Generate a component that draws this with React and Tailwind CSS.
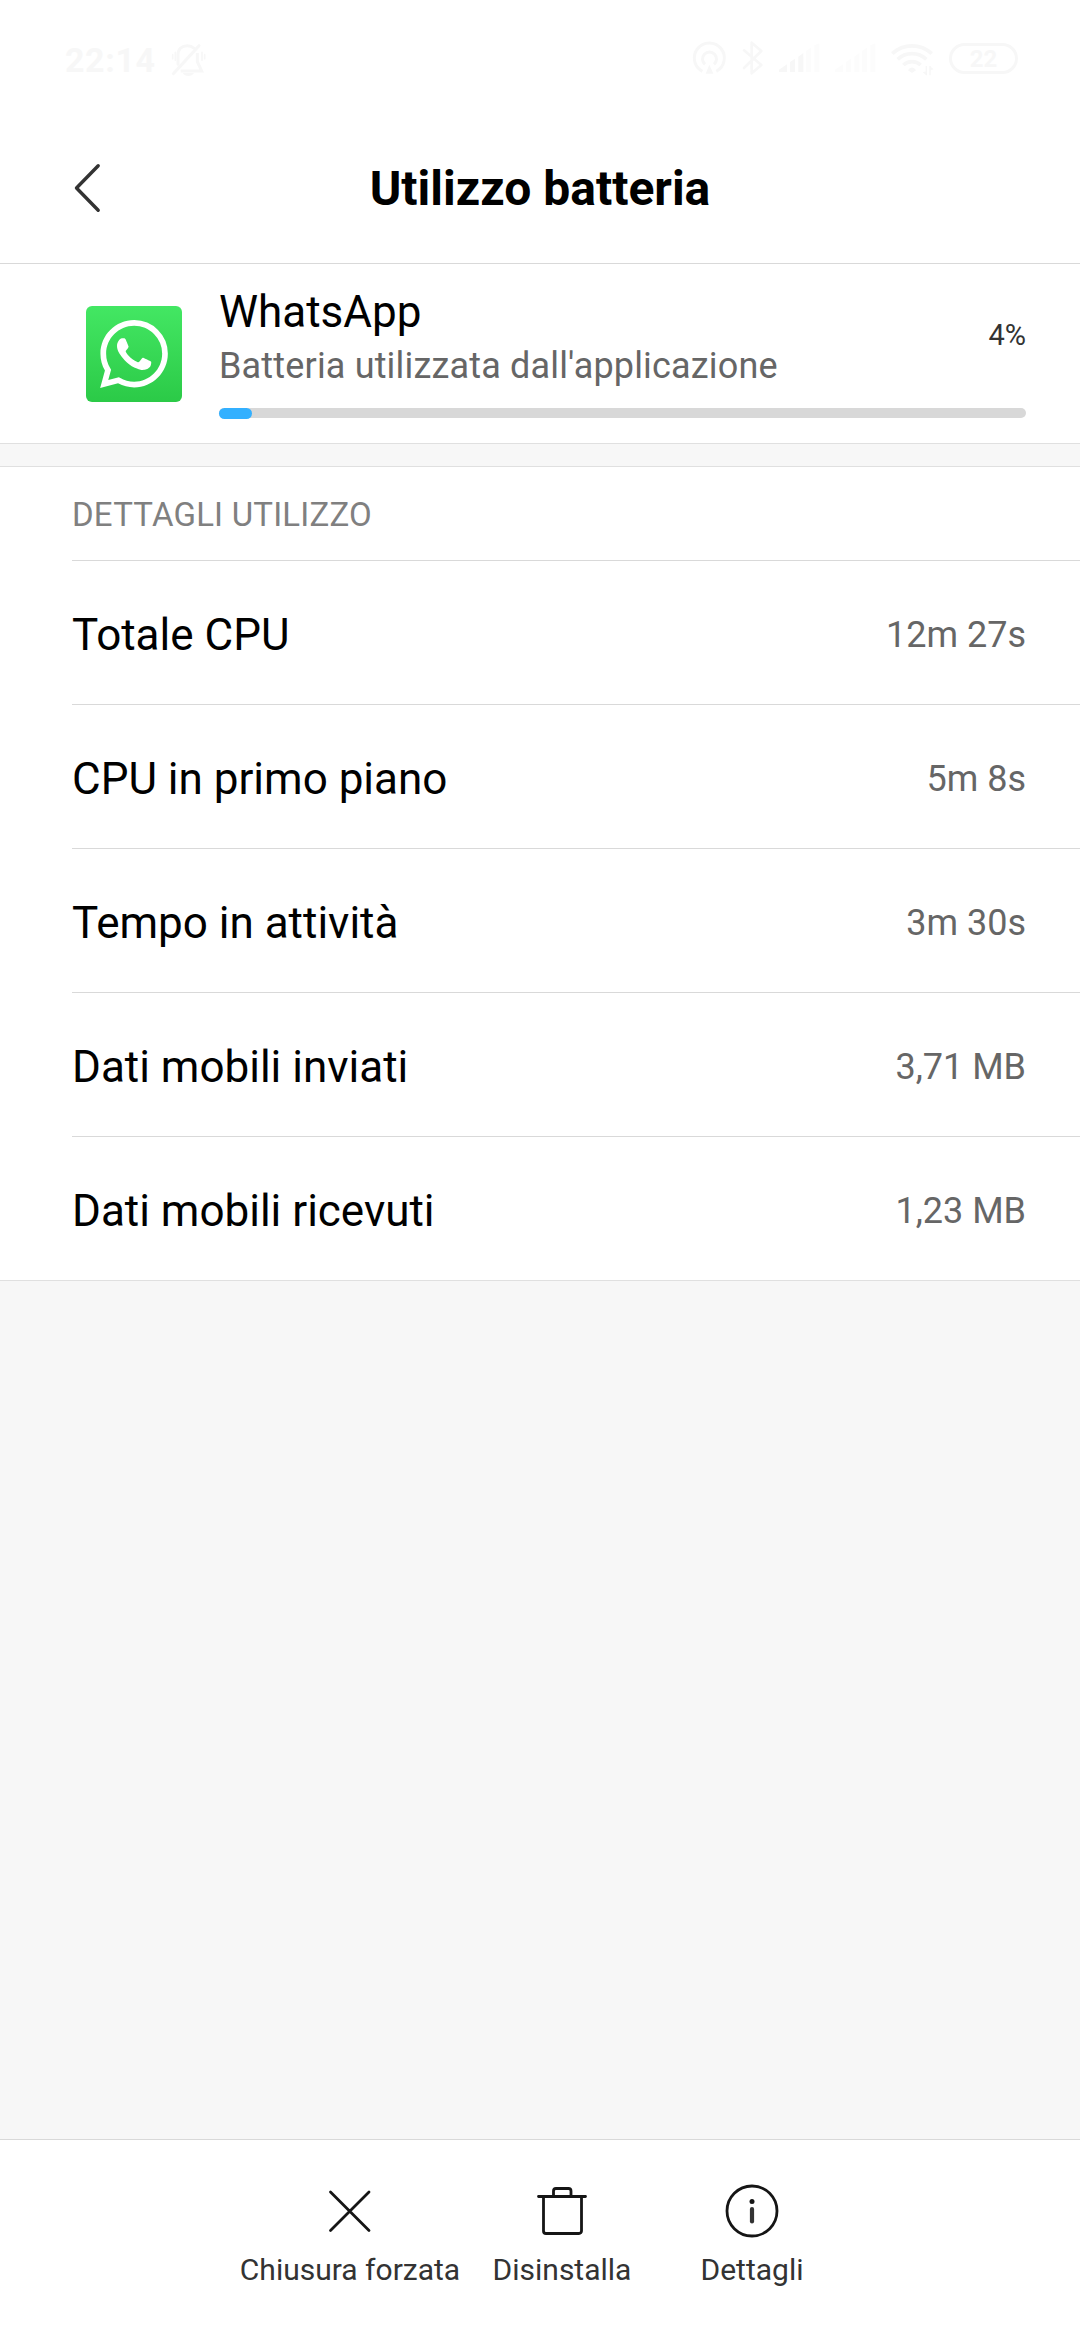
import { SiWhatsapp } from 'react-icons/si'

const usage = [
  { label: 'Totale CPU', value: '12m 27s' },
  { label: 'CPU in primo piano', value: '5m 8s' },
  { label: 'Tempo in attività', value: '3m 30s' },
  { label: 'Dati mobili inviati', value: '3,71 MB' },
  { label: 'Dati mobili ricevuti', value: '1,23 MB' },
]

function MutedBell() {
  return (
    <svg className="w-[36px] h-[34px]" viewBox="0 0 108 102" fill="none" stroke="currentColor" strokeLinecap="round">
      <path d="M24 64V36C24 18 36 8 52 8c8 0 14 2 19 7" strokeWidth="9" />
      <path d="M82 30v26l13 28H32" strokeWidth="9" strokeLinecap="butt" />
      <path d="M10 92 87 8" strokeWidth="9" />
      <path d="M8 35v12M104 35v12M16 28v24M96 28v24" strokeWidth="5" />
      <path d="M38 90h34c-6 12-28 12-34 0Z" fill="currentColor" stroke="none" />
    </svg>
  )
}

function Signal({ active }) {
  const bars = [
    'M12 156v-7l24-16v23Z',
    'M45 156v-30l15-10v40Z',
    'M70 156v-46l15-11v57Z',
    'M93 156V93l15-10v73Z',
    'M118 156V76l15-6v86Z',
  ]
  return (
    <svg className="w-[56px] h-[80px]" viewBox="0 0 168 240">
      {bars.map((d, i) => (
        <path key={d} d={d} className={i < active ? 'fill-[#f7f7f7]' : 'fill-[#fcfcfc]'} />
      ))}
    </svg>
  )
}

function StatusBar() {
  return (
    <div className="h-[114px] flex justify-between pl-[65px] pr-[60px] pt-5 text-[#f7f7f7]">
      <div className="h-20 flex items-center">
        <span className="text-[34px] leading-none font-bold tracking-[0.6px] w-[105px]">22:14</span>
        <MutedBell />
      </div>
      <div className="h-20 flex">
        {/* Hotspot */}
        <svg className="w-[45px] h-[80px]" viewBox="0 0 135 240" fill="none" stroke="currentColor" strokeWidth="9">
          <path d="M34 154a45 45 0 1 1 42 0" />
          <path d="M42 133a21 21 0 1 1 27 0" />
          <path d="M55 134 44 161h23Z" fill="currentColor" stroke="none" />
        </svg>
        {/* Bluetooth */}
        <svg className="w-[39px] h-[80px]" viewBox="0 0 117 240" fill="none" stroke="currentColor" strokeWidth="8" strokeLinecap="round" strokeLinejoin="round">
          <path d="m24 91 52 44-29 25V68l29 25-52 51" />
        </svg>
        <Signal active={3} />
        <Signal active={0} />
        {/* Wi-Fi */}
        <svg className="w-[60px] h-[80px]" viewBox="0 0 180 240" fill="none" stroke="currentColor" strokeWidth="11">
          <path d="M16 101a86 86 0 0 1 118 0" />
          <path d="M32 118a62 62 0 0 1 86 0" />
          <path d="M49 135a38 38 0 0 1 52 0" />
          <path d="m63 151c7-11 17-11 24 0l-12 8Z" fill="currentColor" stroke="none" />
          <path d="M118 138v28M129 138v28" strokeWidth="4" />
          <path d="m107 157 11-3v12ZM140 148l-11 3v-12Z" fill="currentColor" stroke="none" />
        </svg>
        <div className="h-[31px] w-[69px] mt-[23px] mx-[2px] rounded-full border-[3px] border-[#f7f7f7] flex items-center justify-center text-[24px] leading-none font-bold">
          22
        </div>
      </div>
    </div>
  )
}

function Action({ label, className, children }) {
  return (
    <button className={`flex flex-col items-center ${className}`}>
      <svg
        className="w-[60px] h-[60px]"
        viewBox="0 0 60 60"
        fill="none"
        stroke="#151515"
        strokeWidth="2.8"
        strokeLinecap="round"
        strokeLinejoin="round"
      >
        {children}
      </svg>
      <span className="mt-[9px] text-[30px] leading-10 text-[#333333] whitespace-nowrap">{label}</span>
    </button>
  )
}

export default function App() {
  return (
    <div className="w-[1080px] h-[2340px] flex flex-col bg-[#f7f7f7] font-[Roboto,sans-serif] text-black">
      {/* Header */}
      <header className="h-[264px] bg-white border-b border-[#d9d9d9]">
        <StatusBar />
        <div className="h-[149px] grid grid-cols-[120px_1fr_120px] items-center">
          <button className="pl-[70px]" aria-label="Indietro">
            <svg className="w-[34px] h-[56px]" viewBox="0 0 34 56" fill="none" stroke="#333" strokeWidth="3.4" strokeLinecap="round" strokeLinejoin="round">
              <path d="M28.2 4.800 6.500 27 28.200 49.200" />
            </svg>
          </button>
          <h1 className="text-center text-[48px] leading-[56px] font-bold">Utilizzo batteria</h1>
        </div>
      </header>

      {/* App */}
      <section className="h-[180px] flex bg-white border-b border-[#e0e0e0] pl-[86px] pr-[54px]">
        <div className="size-24 mt-[42px] mr-[37px] rounded-md bg-linear-to-b from-[#43e763] to-[#2bca47] flex items-center justify-center">
          <SiWhatsapp className="size-[68px] text-white" />
        </div>
        <div className="flex-1 pt-[18px]">
          <div className="flex items-center justify-between">
            <div>
              <p className="text-[44px] leading-[60px]">WhatsApp</p>
              <p className="text-[36px] leading-[48px] tracking-[0.17px] text-[#666666]">Batteria utilizzata dall'applicazione</p>
            </div>
            <span className="text-[29px] text-[#333333]">4%</span>
          </div>
          <div className="mt-[18px] h-[10px] rounded-full bg-[#d8d8d8]">
            <div className="h-[11px] w-[33px] rounded-full bg-[#33b0ff]" />
          </div>
        </div>
      </section>

      {/* Dettagli */}
      <section className="mt-[22px] bg-white border-y border-[#e0e0e0] pl-[72px]">
        <h2 className="h-[93px] flex items-center pt-[2px] text-[33px] tracking-[0.2px] text-[#808080]">DETTAGLI UTILIZZO</h2>
        {usage.map((item) => (
          <div key={item.label} className="h-[144px] flex items-center justify-between border-t border-[#d9d9d9] pt-1 pr-[54px]">
            <span className="text-[44px]">{item.label}</span>
            <span className="text-[36px] text-[#666666]">{item.value}</span>
          </div>
        ))}
      </section>

      {/* Azioni */}
      <footer className="mt-auto h-[201px] flex justify-center bg-white border-t border-[#d9d9d9] pt-[41px]">
        <Action label="Chiusura forzata" className="w-[254px]">
          <path d="M10.5 11 49 49.5M49 11 10.5 49.5" />
        </Action>
        <Action label="Disinstalla" className="w-[170px]">
          <path d="M6.5 15.5h47M11.5 15.5V50a2.5 2.5 0 0 0 2.5 2.5h33a2.5 2.5 0 0 0 2.5-2.5V15.5M21.500 15v-5A2.500 2.500 0 0 1 24 7.500h12.500A2.500 2.500 0 0 1 39 10v5" />
        </Action>
        <Action label="Dettagli" className="w-[210px]">
          <circle cx="30" cy="30" r="25" />
          <circle cx="30" cy="20.5" r="2.5" fill="#151515" stroke="none" />
          <path d="M30 28v12.500" stroke="#333" strokeWidth="4.200" />
        </Action>
      </footer>
    </div>
  )
}
